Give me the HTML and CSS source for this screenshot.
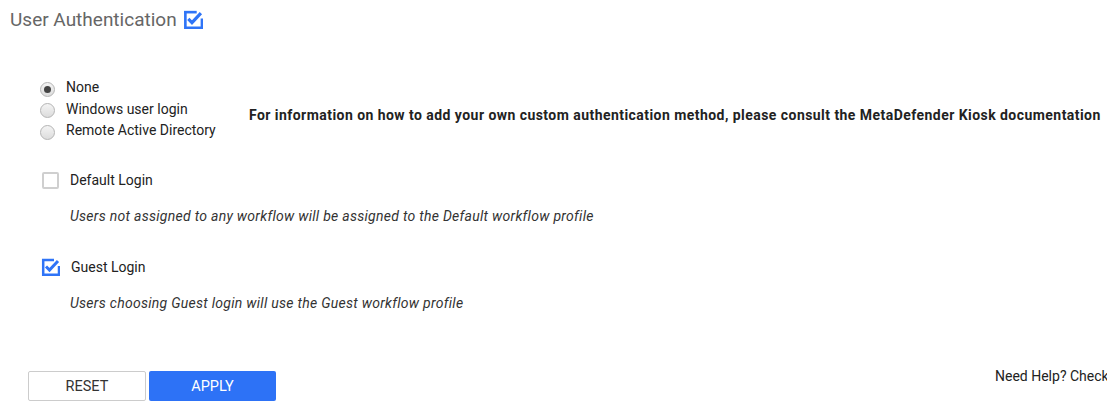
FILE: index.html
```html
<!DOCTYPE html>
<html lang="en">
<head>
    <meta charset="UTF-8">
    <title>User Authentication</title>
    <link rel="stylesheet" href="styles.css">
</head>
<body>

    <!-- Header -->
    <h1 class="page-title">
        User Authentication
        <svg class="title-check" width="21" height="21" viewBox="0 0 20 20">
            <path d="M2 3h12" stroke="#2f74f7" stroke-width="2.5" fill="none"/>
            <path d="M3.2 2v15.8h15.8V9" stroke="#2f74f7" stroke-width="2.5" fill="none"/>
            <path d="M6 9.5l3.5 3.5L18 4" stroke="#2f74f7" stroke-width="3" fill="none"/>
        </svg>
    </h1>

    <main class="auth-panel">

        <!-- Authentication method -->
        <section class="method-row">
            <div class="radio-list">
                <label class="radio"><span class="radio-dot checked"></span>None</label>
                <label class="radio"><span class="radio-dot"></span>Windows user login</label>
                <label class="radio"><span class="radio-dot"></span>Remote Active Directory</label>
            </div>
            <p class="method-info">For information on how to add your own custom authentication method, please consult the MetaDefender Kiosk documentation</p>
        </section>

        <!-- Default login -->
        <section class="login-option">
            <label class="check">
                <span class="box"></span>
                Default Login
            </label>
            <p class="hint">Users not assigned to any workflow will be assigned to the Default workflow profile</p>
        </section>

        <!-- Guest login -->
        <section class="login-option guest">
            <label class="check">
                <svg class="box-on" width="20" height="20" viewBox="0 0 20 20">
                    <path d="M2 3h12" stroke="#2f74f7" stroke-width="2.5" fill="none"/>
                    <path d="M3.2 2v15.8h15.8V9" stroke="#2f74f7" stroke-width="2.5" fill="none"/>
                    <path d="M6 9.5l3.5 3.5L18 4" stroke="#2f74f7" stroke-width="3" fill="none"/>
                </svg>
                Guest Login
            </label>
            <p class="hint">Users choosing Guest login will use the Guest workflow profile</p>
        </section>

    </main>

    <!-- Footer -->
    <footer class="footer">
        <div class="buttons">
            <button class="btn btn-reset">RESET</button>
            <button class="btn btn-apply">APPLY</button>
        </div>
        <span class="help">Need Help? Check the documentation</span>
    </footer>

</body>
</html>
```

FILE: styles.css
```css
/* Basic Reset */
* {
    margin: 0;
    padding: 0;
    box-sizing: border-box;
}

body {
    font-family: Roboto, "Liberation Sans", sans-serif;
    font-size: 14px;
    color: #222;
    background-color: #ffffff;
    width: 1107px;
    height: 413px;
    overflow: hidden;
}

/* Header */
.page-title {
    display: flex;
    align-items: center;
    gap: 5px;
    font-size: 19px;
    font-weight: normal;
    color: #666;
    padding: 4px 0 0 10px;
    height: 34px;
}

.title-check {
    margin-top: 1px;
}

/* Panel */
.auth-panel {
    padding: 44px 0 0 40px;
}

.method-row {
    display: flex;
    align-items: flex-start;
}

.radio-list {
    display: flex;
    flex-direction: column;
    gap: 2.5px;
    width: 209px;
}

.radio {
    display: flex;
    align-items: center;
    gap: 11px;
    height: 19px;
    line-height: 19px;
}

.radio-dot {
    width: 15px;
    height: 15px;
    border-radius: 50%;
    border: 1px solid #b4b4b4;
    background: linear-gradient(#f4f4f4, #dcdcdc);
    position: relative;
    margin-top: 3px;
}

.radio-dot.checked::after {
    content: "";
    position: absolute;
    left: 3px;
    top: 3px;
    width: 7px;
    height: 7px;
    border-radius: 50%;
    background-color: #444;
}

.method-info {
    font-weight: bold;
    letter-spacing: 0.45px;
    margin-top: 29px;
}

/* Login options */
.login-option {
    margin-top: 30px;
}

.login-option.guest {
    margin-top: 33px;
}

.check {
    display: flex;
    align-items: center;
    gap: 11px;
    height: 20px;
}

.box {
    width: 17px;
    height: 17px;
    border: 2px solid #cfcfcf;
    border-radius: 2px;
    margin-left: 2px;
}

.hint {
    font-style: italic;
    letter-spacing: 0.28px;
    color: #333;
    margin: 18px 0 0 30px;
}

/* Footer */
.footer {
    display: flex;
    justify-content: space-between;
    align-items: flex-start;
    padding: 60px 0 0 28px;
}

.buttons {
    display: flex;
    gap: 3px;
}

.btn {
    font-family: Roboto, "Liberation Sans", sans-serif;
    font-size: 14.5px;
    height: 30px;
    border-radius: 2px;
    cursor: pointer;
}

.btn-reset {
    width: 118px;
    background-color: #fff;
    color: #333;
    border: 1px solid #ccc;
}

.btn-apply {
    width: 127px;
    background-color: #2d72f6;
    color: #fff;
    border: none;
}

.help {
    white-space: nowrap;
    width: 112px;
    overflow: hidden;
    margin-top: -3px;
    color: #222;
}
```
